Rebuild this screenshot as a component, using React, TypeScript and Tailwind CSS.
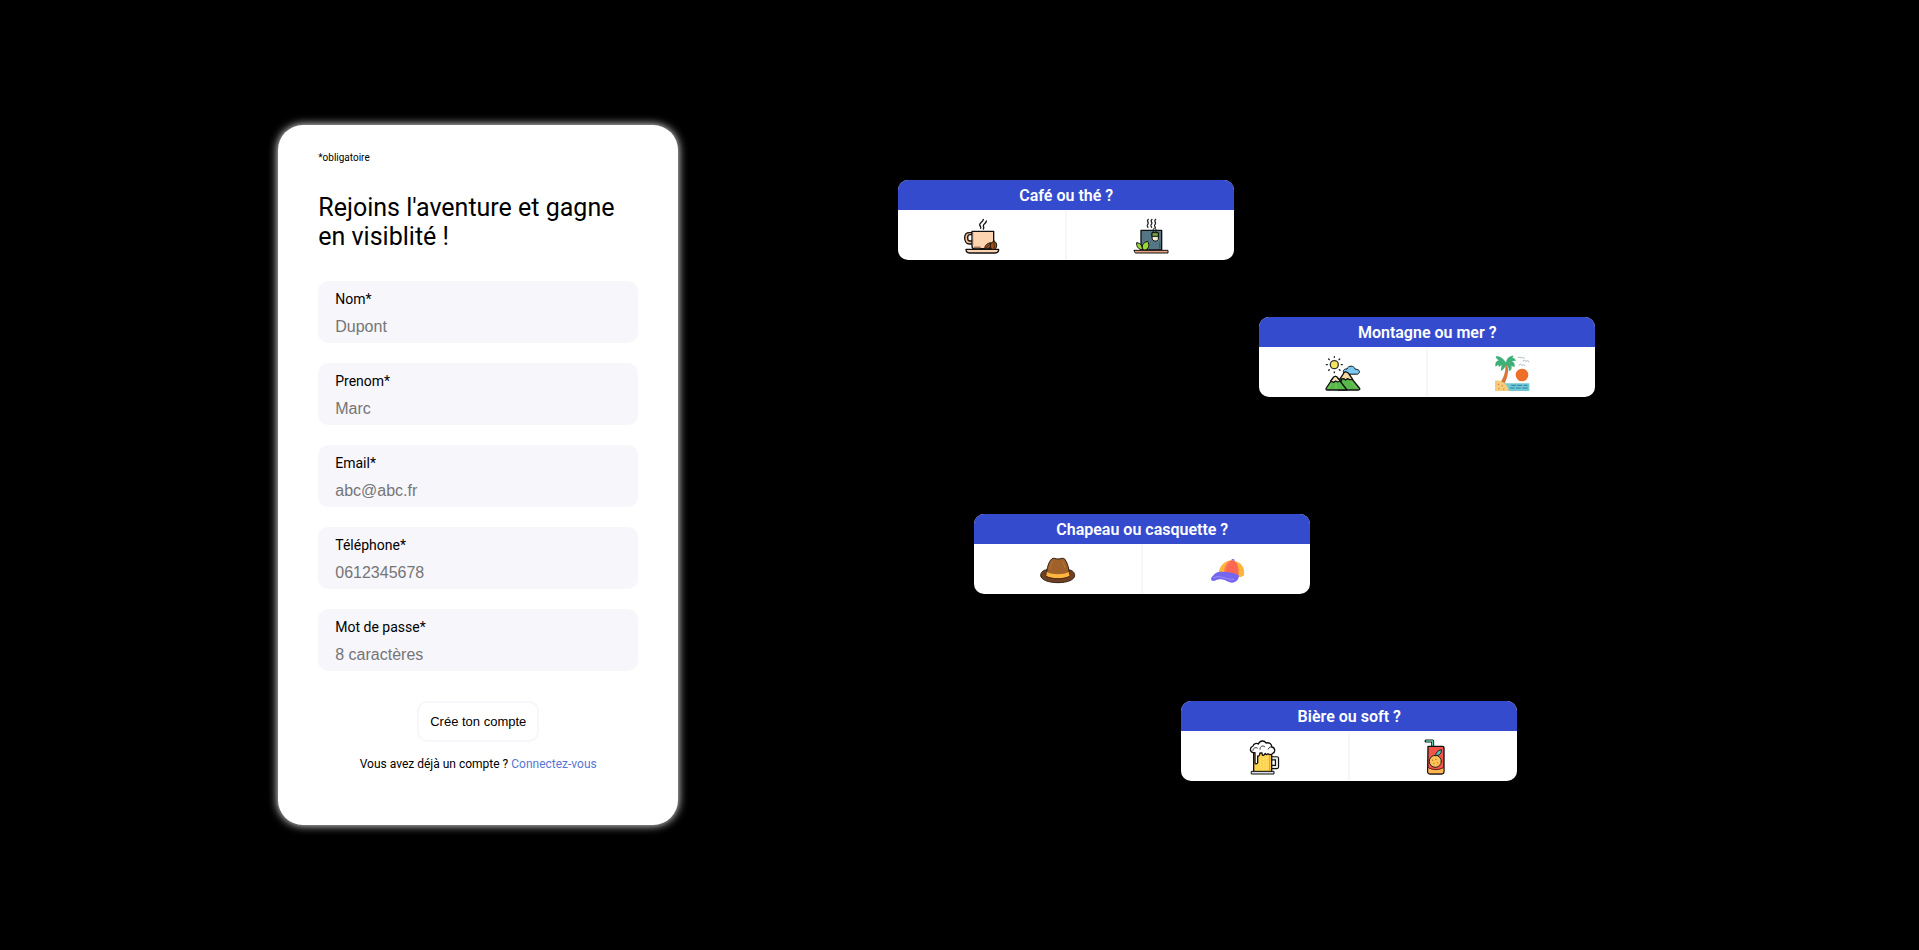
import type { ReactNode } from "react";

type Field = { id: string; label: string; placeholder: string; type: string };

const fields: Field[] = [
  { id: "nom", label: "Nom*", placeholder: "Dupont", type: "text" },
  { id: "prenom", label: "Prenom*", placeholder: "Marc", type: "text" },
  { id: "email", label: "Email*", placeholder: "abc@abc.fr", type: "email" },
  { id: "telephone", label: "Téléphone*", placeholder: "0612345678", type: "tel" },
  { id: "motdepasse", label: "Mot de passe*", placeholder: "8 caractères", type: "password" },
];

function Icon({ children }: { children: ReactNode }) {
  return (
    <svg viewBox="0 0 108 108" className="size-9" fill="none" strokeLinecap="round" strokeLinejoin="round" aria-hidden="true">
      {children}
    </svg>
  );
}

function CoffeeIcon() {
  return (
    <Icon>
      <g stroke="#111" strokeWidth="4">
        <path d="M58 4c0 8-12 10-11 17 1 4 5 5 3 10M67 9c0 8-10 9-9 15 1 3 3 5 0 9" />
        <path d="M24 44h-8C7 44 2 49 2 59s5 19 14 19h10v-9h-8c-5 0-7-4-7-10s2-9 7-9h6z" fill="#f3bd97" />
        <path d="M24 40h65v52H30c-4 0-6-3-6-8z" fill="#fcd5b0" />
        <path d="M6 94h98c0 7-4 11-10 11H16c-6 0-10-4-10-11z" fill="#fcd5b0" />
        <path d="M62 92c0-10 7-17 20-18 1 9-3 17-10 18z" fill="#a4511c" strokeWidth="3" />
        <path d="M82 93c-6-10-3-19 9-24 9 7 9 17 3 24z" fill="#a4511c" strokeWidth="3" />
        <path d="M91 72c-4 7 3 12-1 19M67 90c3-6 7-8 12-12" strokeWidth="2" />
      </g>
      <path d="M32 88h16" stroke="#a7765a" strokeWidth="5" />
      <path d="M28 46v34" stroke="#ee9a83" strokeWidth="2" />
    </Icon>
  );
}

function TeaIcon() {
  return (
    <Icon>
      <path d="M46 4c-8 7 3 8-1 14s-4 5 0 10M57 4c-8 7 3 8-1 14s-4 5 0 10M68 4c-8 7 3 8-1 14s-4 5 0 10" stroke="#222" strokeWidth="4" />
      <g stroke="#111" strokeWidth="3">
        <path d="M24 37h62v59H32c-5 0-8-3-8-7z" fill="#557685" strokeWidth="4" />
        <path d="M61 43v-8c0-6 8-6 8 0v8" />
        <path d="M58 45h18v19l-5 5h-8l-5-5z" fill="#f3ead5" />
        <path d="M58 44h18v11H58z" fill="#75a83a" />
        <path d="M28 96c-12-2-18-10-17-22 12 1 18 10 17 22z" fill="#9bd733" />
        <path d="M31 96c-7-12-2-22 13-26 7 12 3 23-7 26z" fill="#9bd733" />
        <path d="M4 97h101v8H8c-3 0-4-4-4-8z" fill="#e9a184" />
      </g>
      <path d="M80 74v16" stroke="#3c5966" strokeWidth="4" />
    </Icon>
  );
}

function MountainIcon() {
  return (
    <Icon>
      <circle cx="28" cy="29" r="12" fill="#f1e65d" stroke="#333" strokeWidth="4" />
      <path d="M28 5v2M28 51v2M4 29h3M49 29h3M11 12l2 2M44 12l-2 2M11 46l2-2M45 46l-2-2" stroke="#222" strokeWidth="4" />
      <g stroke="#111" strokeWidth="4">
        <path d="M59 57c-8-7-4-16 7-15 3-11 21-12 25 1 13-1 16 10 8 14z" fill="#7bc8f3" strokeWidth="3" />
        <path d="M40 105 54 62c4-11 13-10 18-1l31 38c3 4 1 6-3 6z" fill="#58b84b" />
        <path d="m44 73 10-15c4-11 13-9 18-1l11 16-9 1-6-3-6 4-6-4z" fill="#f7d8a3" />
        <path d="M4 99 24 69c4-6 10-7 14 0l28 36H7c-4 0-5-3-3-6z" fill="#58b84b" />
        <path d="m17 78 7-9c4-6 10-7 14 0l8 9-8 3-6-3-6 4z" fill="#fbe7bd" />
      </g>
      <path d="M18 88 11 99M33 86v14M78 81l16 18" stroke="#8ed66b" strokeWidth="2" />
    </Icon>
  );
}

function BeachIcon() {
  return (
    <Icon>
      <path d="M30 24c9 13 3 38-12 60l13 2c12-20 15-46 6-62z" fill="#d87539" />
      <path d="M35 22C30 12 18 3 6 3c-1 6 3 10 9 13C6 18 2 25 5 35l8-6 2 7 8-6-3 18c10-4 15-12 15-20 7 6 11 12 9 21 8-3 11-9 8-17l9 5c3-9 0-15-7-19l12-1c-2-7-8-9-14-7 5-2 7-5 6-8-11 0-19 6-22 20z" fill="#3fb078" />
      <circle cx="84" cy="60" r="19" fill="#ee7027" />
      <path d="M24 85h82v23H24z" fill="#73c7cf" />
      <path d="M3 77c17-2 28 5 37 17 3 4 3 7 4 14H3z" fill="#f8cc79" />
      <path d="M53 91h12M71 91h12M90 91h9M49 99h12M67 99h12M86 99h14" stroke="#287eb4" strokeWidth="3" />
      <path d="m12 88 2 1M24 92l2 1M14 101l2-1M28 103l2-1" stroke="#ce7745" strokeWidth="3" />
      <path d="m73 8 5-2 4 3 4-2 5 3M87 18l5-2 4 3 4-2 5 3M75 30l5-2 4 3 4-2 5 3" stroke="#a5bac6" strokeWidth="3" />
    </Icon>
  );
}

function HatIcon() {
  return (
    <Icon>
      <path d="M20 53C8 55 2 62 2 70c0 13 23 22 52 22s50-9 50-22c0-8-6-15-18-17z" fill="#704020" stroke="#302016" strokeWidth="3" />
      <path d="M19 67c2-19 7-38 16-46 6-5 11 0 19 0s14-5 20 0c8 10 13 27 14 46-18 9-50 9-69 0z" fill="#a0602a" stroke="#302016" strokeWidth="3" />
      <path d="M20 60c18 9 49 9 67 0l1 12c-19 9-49 9-69 0z" fill="#ffb53e" />
      <path d="M19 74c20 9 50 9 69 0" stroke="#4f2b19" strokeWidth="3" />
      <path d="M39 28c-5 5-7 12-9 22M67 27c4 6 6 12 8 20" stroke="#b4763a" strokeWidth="3" />
    </Icon>
  );
}

function CapIcon() {
  return (
    <Icon>
      <path d="M29 62c3-20 16-35 38-37 27 3 42 19 38 45-5 6-16 6-24 4z" fill="#ffb43b" />
      <path d="M45 64c1-21 9-37 25-39 15 3 22 23 17 50-11 1-29-4-42-11z" fill="#ff6752" />
      <path d="M67 25c0-5 9-6 10 0v2z" fill="#9270d8" />
      <path d="M60 31c-8 9-12 20-12 31" stroke="#ff8b65" strokeWidth="3" />
      <path d="M29 60c20-2 41 2 60 9 3 10-6 22-20 23-13 0-19-10-34-10-12 0-15 5-23 5-7-1-7-10-3-13 7-5 9-13 20-14z" fill="#7566f0" />
      <path d="M14 77c20-10 40 8 60 5" stroke="#9b8df7" strokeWidth="3" />
    </Icon>
  );
}

function BeerIcon() {
  return (
    <Icon>
      <path d="M74 58h16v26H74" stroke="#111" strokeWidth="13" />
      <path d="M74 58h16v26H74" stroke="#e2e6e9" strokeWidth="6" />
      <path d="M20 36h54v62H20z" fill="#ffd34e" stroke="#111" strokeWidth="4" />
      <path d="M41 66v26M50 60v32M59 57v35" stroke="#fff0a0" strokeWidth="3" strokeDasharray="1 9" />
      <path d="M68 49v45" stroke="#e6a72d" strokeWidth="4" />
      <path d="M18 41C7 38 8 25 18 21c2-7 11-10 16-6C39 3 53 4 57 12c9-3 18 3 17 12 10 1 13 15 3 19-4 5-10 5-14 1-3 4-7 3-8-1l-4 5c-4 3-6-1-6-6h-6c-1 6-3 11-7 9v20c-1 5-8 5-8 0V41z" fill="#fff" stroke="#111" strokeWidth="4" />
      <path d="M18 34c0-7 7-10 13-7M39 31c-1-9 8-13 14-8M64 30c2-6 7-8 11-6" stroke="#333" strokeWidth="3" />
      <path d="M14 97h67v8H14z" fill="#d9dfe3" stroke="#111" strokeWidth="3" />
    </Icon>
  );
}

function JuiceIcon() {
  return (
    <Icon>
      <path d="M30 6h20v16" stroke="#111" strokeWidth="9" />
      <path d="M31 6h19v18" stroke="#64c9a7" strokeWidth="4" />
      <path d="M36 22h44c3 0 4 2 4 5v70c0 5-3 8-7 8H42c-5 0-7-3-7-8z" fill="#f35349" stroke="#111" strokeWidth="4" />
      <path d="M37 86c14 8 31 8 45 0v12c0 3-2 5-5 5H42c-3 0-5-2-5-5z" fill="#ffb750" />
      <path d="M37 86c14 8 31 8 45 0" stroke="#5a201e" strokeWidth="3" />
      <circle cx="58" cy="67" r="18" fill="#ffc257" stroke="#222" strokeWidth="3" />
      <path d="M59 50c0-9 6-16 17-18 1 11-5 18-17 18z" fill="#4fc4c6" stroke="#222" strokeWidth="3" />
      <path d="M50 63v1M60 61v1M54 73v1M65 71v1" stroke="#a65e20" strokeWidth="3" />
    </Icon>
  );
}

type Choice = { name: string; icon: ReactNode };
type Poll = { question: string; place: string; choices: [Choice, Choice] };

const polls: Poll[] = [
  {
    question: "Café ou thé ?",
    place: "ml-[220px]",
    choices: [{ name: "Café", icon: <CoffeeIcon /> }, { name: "Thé", icon: <TeaIcon /> }],
  },
  {
    question: "Montagne ou mer ?",
    place: "ml-[581px] mt-[57px]",
    choices: [{ name: "Montagne", icon: <MountainIcon /> }, { name: "Mer", icon: <BeachIcon /> }],
  },
  {
    question: "Chapeau ou casquette ?",
    place: "ml-[296px] mt-[117px]",
    choices: [{ name: "Chapeau", icon: <HatIcon /> }, { name: "Casquette", icon: <CapIcon /> }],
  },
  {
    question: "Bière ou soft ?",
    place: "ml-[503px] mt-[107px]",
    choices: [{ name: "Bière", icon: <BeerIcon /> }, { name: "Soft", icon: <JuiceIcon /> }],
  },
];

function ChoiceButton({ choice }: { choice: Choice }) {
  return (
    <button type="button" aria-label={choice.name} className="flex flex-1 justify-center pt-2 pb-1.5">
      {choice.icon}
    </button>
  );
}

function PollCard({ poll }: { poll: Poll }) {
  return (
    <article className={`w-84 overflow-hidden rounded-[10px] bg-white ${poll.place}`}>
      <h2 className="bg-[#344bcd] pt-0.5 text-center text-base leading-7 font-semibold text-white">{poll.question}</h2>
      <div className="flex">
        <ChoiceButton choice={poll.choices[0]} />
        <div className="w-0.5 bg-[#f7f6fb]" />
        <ChoiceButton choice={poll.choices[1]} />
      </div>
    </article>
  );
}

export default function App() {
  return (
    <main className="flex min-h-screen items-start bg-black pl-[14.5%] font-[Roboto,sans-serif] text-black">
      <form className="my-[125px] w-[400px] shrink-0 rounded-[25px] bg-white px-10 pt-[27px] pb-[54px] shadow-[0_0_10px_#fff]">
        <p className="text-[10px] leading-3">*obligatoire</p>
        <h1 className="mt-[29px] text-[25px] leading-[29px]">Rejoins l'aventure et gagne en visiblité !</h1>
        <div className="mt-[30px] flex flex-col gap-5">
          {fields.map((field) => (
            <div key={field.id} className="flex flex-col rounded-[10px] bg-[#f7f6fb] px-[17px] pt-2.5 pb-[5px]">
              <label htmlFor={field.id} className="text-sm leading-4">{field.label}</label>
              <input
                id={field.id}
                type={field.type}
                placeholder={field.placeholder}
                className="mt-[9px] h-[22px] w-full bg-transparent font-['Liberation_Sans',sans-serif] text-base outline-none placeholder:text-[#757575]"
              />
            </div>
          ))}
        </div>
        <div className="mt-[30px] flex flex-col items-center">
          <button
            type="submit"
            className="rounded-[10px] border-2 border-[#f7f6fb] bg-white px-[11px] py-[11px] font-['Liberation_Sans',sans-serif] text-[13px] leading-[15px]"
          >
            Crée ton compte
          </button>
          <p className="mt-[15px] text-xs leading-[14px]">
            Vous avez déjà un compte ? <a href="#connexion" className="text-[#5776d5]">Connectez-vous</a>
          </p>
        </div>
      </form>
      <section className="flex flex-1 flex-col items-start pt-[180px]">
        {polls.map((poll) => (
          <PollCard key={poll.question} poll={poll} />
        ))}
      </section>
    </main>
  );
}
